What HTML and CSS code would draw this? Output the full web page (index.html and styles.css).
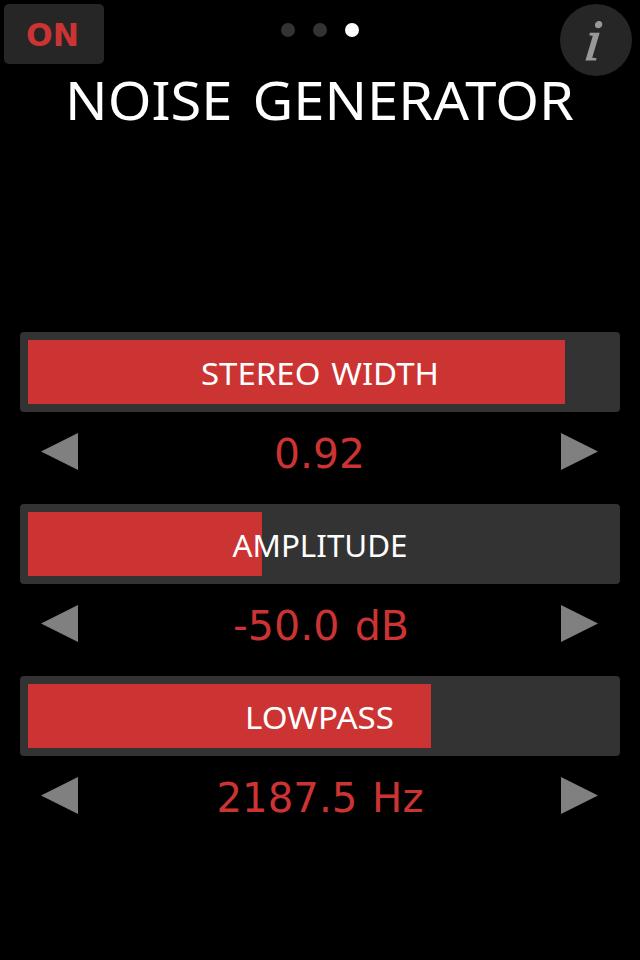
FILE: index.html
```html
<!DOCTYPE html>
<html lang="en">
<head>
    <meta charset="UTF-8">
    <meta name="viewport" content="width=device-width, initial-scale=1.0">
    <title>Noise Generator</title>
    <link rel="stylesheet" href="styles.css">
</head>
<body>

    <header>
        <button class="power">
            <svg width="100" height="60"><text x="22" y="42" textLength="53" lengthAdjust="spacingAndGlyphs">ON</text></svg>
        </button>
        <div class="pages">
            <span class="dot"></span>
            <span class="dot"></span>
            <span class="dot active"></span>
        </div>
        <button class="info" aria-label="Info">
            <svg width="72" height="72"><text transform="translate(23 56) skewX(-7)">i</text></svg>
        </button>
    </header>

    <main>
        <h1>
            <svg width="640" height="90"><text x="65" y="56" textLength="509" lengthAdjust="spacingAndGlyphs">NOISE GENERATOR</text></svg>
        </h1>

        <section class="control">
            <div class="slider">
                <div class="fill" style="width: 537px"></div>
                <svg class="label" width="600" height="80"><text x="181" y="52.500" textLength="238" lengthAdjust="spacingAndGlyphs">STEREO WIDTH</text></svg>
            </div>
            <div class="stepper">
                <svg class="arrow" width="37" height="38"><path d="M0 18.500L37 0V37Z"/></svg>
                <svg class="value" width="240" height="80"><text x="74" y="56" textLength="91" lengthAdjust="spacingAndGlyphs">0.92</text></svg>
                <svg class="arrow" width="37" height="38"><path d="M37 18.500L0 0V37Z"/></svg>
            </div>
        </section>

        <section class="control">
            <div class="slider">
                <div class="fill" style="width: 234px"></div>
                <svg class="label" width="600" height="80"><text x="212.500" y="52.500" textLength="175" lengthAdjust="spacingAndGlyphs">AMPLITUDE</text></svg>
            </div>
            <div class="stepper">
                <svg class="arrow" width="37" height="38"><path d="M0 18.500L37 0V37Z"/></svg>
                <svg class="value" width="240" height="80"><text x="33" y="56" textLength="176" lengthAdjust="spacingAndGlyphs">-50.0 dB</text></svg>
                <svg class="arrow" width="37" height="38"><path d="M37 18.500L0 0V37Z"/></svg>
            </div>
        </section>

        <section class="control">
            <div class="slider">
                <div class="fill" style="width: 403px"></div>
                <svg class="label" width="600" height="80"><text x="225" y="52.500" textLength="149" lengthAdjust="spacingAndGlyphs">LOWPASS</text></svg>
            </div>
            <div class="stepper">
                <svg class="arrow" width="37" height="38"><path d="M0 18.500L37 0V37Z"/></svg>
                <svg class="value" width="240" height="80"><text x="16.500" y="56" textLength="207" lengthAdjust="spacingAndGlyphs">2187.5 Hz</text></svg>
                <svg class="arrow" width="37" height="38"><path d="M37 18.500L0 0V37Z"/></svg>
            </div>
        </section>
    </main>

</body>
</html>
```
FILE: styles.css
```css
body {
    font-family: "DejaVu Sans", Verdana, sans-serif;
    background-color: #000;
    color: #fff;
    width: 640px;
    height: 960px;
    margin: 0;
    overflow: hidden;
}

svg {
    display: block;
}

header {
    display: flex;
    align-items: flex-start;
    height: 64px;
    padding: 4px 8px 0 4px;
    box-sizing: border-box;
}

button {
    border: none;
    padding: 0;
    background-color: #262626;
    cursor: pointer;
}

.power {
    width: 100px;
    height: 60px;
    border-radius: 5px;
}

.power text {
    font: bold 32px "DejaVu Sans", Verdana, sans-serif;
    fill: #cc3333;
}

.pages {
    display: flex;
    gap: 18px;
    padding-top: 19px;
    margin-left: 177px;
}

.dot {
    width: 14px;
    height: 14px;
    border-radius: 50%;
    background-color: #333;
}

.dot.active {
    background-color: #fff;
}

.info {
    width: 72px;
    height: 72px;
    margin-left: auto;
    border-radius: 50%;
}

.info text {
    font: italic 58px "Liberation Serif", serif;
    fill: #999;
    stroke: #999;
    stroke-width: 1.2px;
}

h1 {
    height: 268px;
    margin: 0;
}

h1 text {
    font: 53.5px "Noto Sans", Verdana, sans-serif;
    word-spacing: 5px;
    fill: #fff;
}

.control {
    height: 172px;
    padding: 0 20px;
}

.slider {
    position: relative;
    height: 80px;
    padding: 8px;
    box-sizing: border-box;
    border-radius: 4px;
    background-color: #333;
}

.fill {
    height: 64px;
    background-color: #cc3333;
}

/* label lies over the fill */
.label {
    position: absolute;
    top: 0;
    left: 0;
}

.label text {
    font: 30.5px "Noto Sans", Verdana, sans-serif;
    word-spacing: 2px;
    fill: #fff;
}

.stepper {
    display: flex;
    justify-content: space-between;
    align-items: flex-start;
    padding: 0 22px 0 21px;
}

.arrow {
    margin-top: 21px;
    fill: #808080;
}

.value text {
    font-size: 40px;
    word-spacing: 2px;
    fill: #cc3333;
}
```
